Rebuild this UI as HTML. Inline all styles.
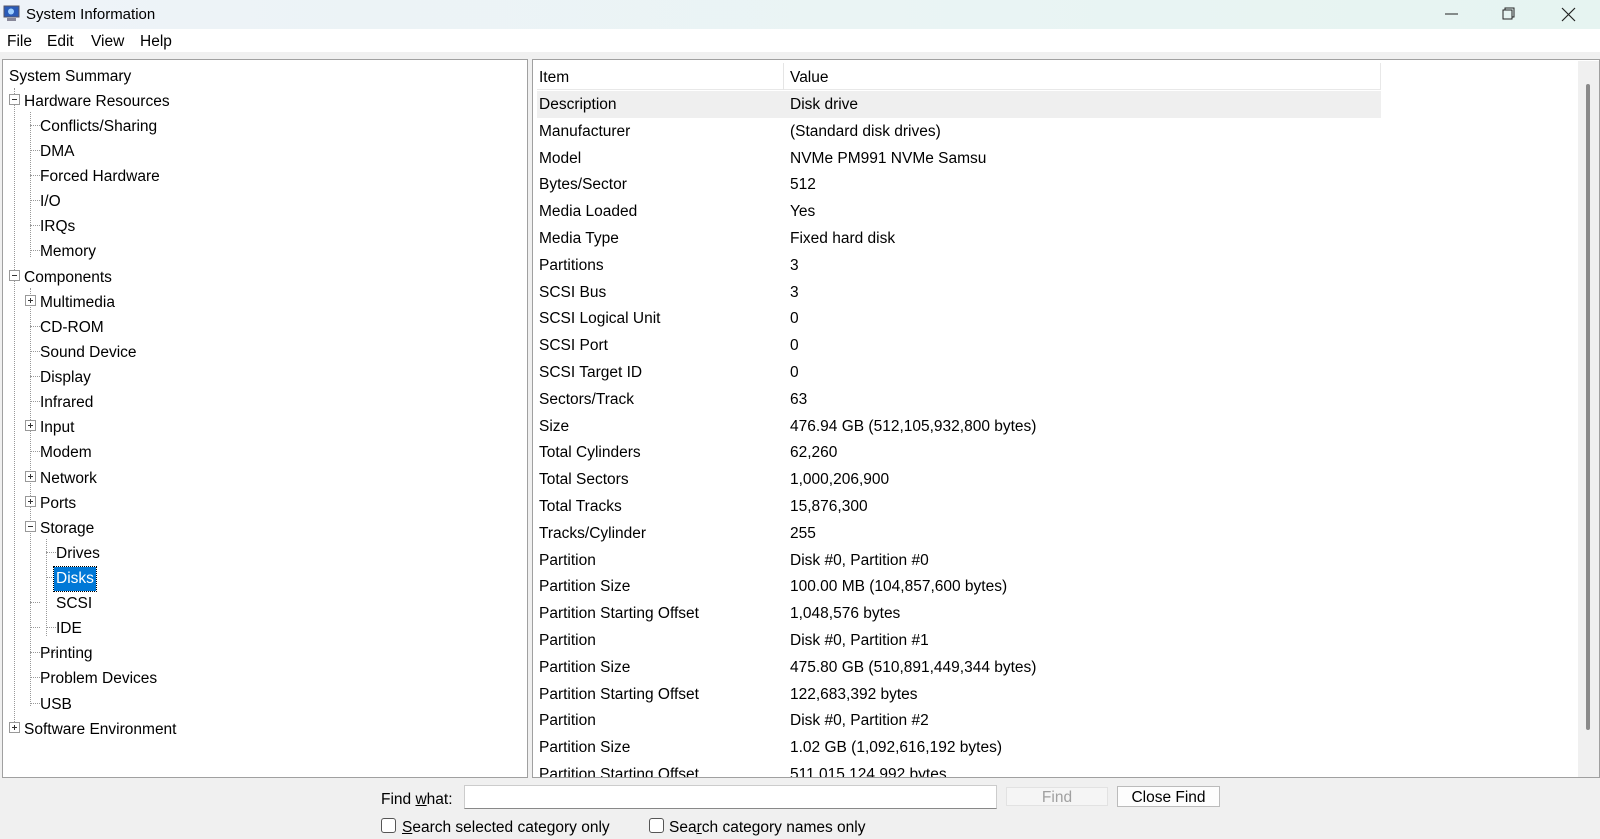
<!DOCTYPE html>
<html><head><meta charset="utf-8"><style>
*{margin:0;padding:0;box-sizing:border-box}
body{width:1600px;height:839px;overflow:hidden;background:#f0f0f0;font-family:"Liberation Sans",sans-serif;font-size:15.5px;color:#000;position:relative}
.a{position:absolute;white-space:nowrap}
#title{left:0;top:0;width:1600px;height:29px;background:linear-gradient(90deg,#eef3f8,#e6f4f1)}
#menu{left:0;top:29px;width:1600px;height:23px;background:#fff}
.pane{position:absolute;background:#fff;border:1px solid #a0a0a0;overflow:hidden}
.tr{position:absolute;height:22px;line-height:22px}
.box{position:absolute;width:11px;height:11px;border:1px solid #999;background:#fff}
.box:before{content:"";position:absolute;left:2px;top:4px;width:5px;height:1px;background:#333}
.box.p:after{content:"";position:absolute;left:4px;top:2px;width:1px;height:5px;background:#333}
.vl{position:absolute;width:0;border-left:1px dotted #999}
.hl{position:absolute;height:0;border-top:1px dotted #999}
.row{position:absolute;left:4px;height:26.8px;line-height:26.8px;width:844px}
.row span{position:absolute;top:1px}
.tx{position:absolute;left:0;top:2px;width:100%;height:100%}
</style></head><body>
<div class="a" id="title"></div>
<svg class="a" style="left:3px;top:5px" width="17" height="17" viewBox="0 0 17 17"><rect x="1" y="1" width="15" height="11" fill="#2a5bb8" stroke="#556"/><circle cx="8" cy="6.5" r="3" fill="#9fd0ff"/><rect x="4" y="13" width="9" height="3" fill="#889"/></svg>
<div class="a" style="left:26px;top:6px;font-size:15px">System Information</div>
<svg class="a" style="left:1445px;top:6px" width="150" height="18"><line x1="0" y1="8" x2="13" y2="8" stroke="#222" stroke-width="1"/><rect x="58" y="4" width="9" height="9" fill="none" stroke="#222"/><path d="M60 4V2h9v9h-2" fill="none" stroke="#222"/><path d="M117 2l13 13M130 2l-13 13" stroke="#222" stroke-width="1.2"/></svg>
<div class="a" id="menu"></div>
<div class="a" style="left:7px;top:33px">File</div>
<div class="a" style="left:47px;top:33px">Edit</div>
<div class="a" style="left:91px;top:33px">View</div>
<div class="a" style="left:140px;top:33px">Help</div>

<div class="pane" style="left:2px;top:59px;width:526px;height:719px">
<div class="vl" style="left:11px;top:28px;height:642px"></div>
<div class="vl" style="left:27px;top:52px;height:145px"></div>
<div class="vl" style="left:27px;top:228px;height:418px"></div>
<div class="vl" style="left:43px;top:479px;height:97px"></div>
<div class="hl" style="left:27px;top:65px;width:10px"></div>
<div class="hl" style="left:27px;top:90px;width:10px"></div>
<div class="hl" style="left:27px;top:115px;width:10px"></div>
<div class="hl" style="left:27px;top:140px;width:10px"></div>
<div class="hl" style="left:27px;top:165px;width:10px"></div>
<div class="hl" style="left:27px;top:190px;width:10px"></div>
<div class="hl" style="left:27px;top:266px;width:10px"></div>
<div class="hl" style="left:27px;top:291px;width:10px"></div>
<div class="hl" style="left:27px;top:316px;width:10px"></div>
<div class="hl" style="left:27px;top:341px;width:10px"></div>
<div class="hl" style="left:27px;top:391px;width:10px"></div>
<div class="hl" style="left:27px;top:542px;width:10px"></div>
<div class="hl" style="left:27px;top:567px;width:10px"></div>
<div class="hl" style="left:27px;top:592px;width:10px"></div>
<div class="hl" style="left:27px;top:617px;width:10px"></div>
<div class="hl" style="left:27px;top:643px;width:10px"></div>
<div class="hl" style="left:43px;top:492px;width:10px"></div>
<div class="hl" style="left:43px;top:517px;width:10px"></div>
<div class="hl" style="left:43px;top:567px;width:10px"></div>
<div class="hl" style="left:43px;top:592px;width:10px"></div>

<div class="box" style="left:6px;top:34px"></div>
<div class="box" style="left:6px;top:210px"></div>
<div class="box p" style="left:22px;top:235px"></div>
<div class="box p" style="left:22px;top:360px"></div>
<div class="box p" style="left:22px;top:411px"></div>
<div class="box p" style="left:22px;top:436px"></div>
<div class="box" style="left:22px;top:461px"></div>
<div class="box p" style="left:6px;top:662px"></div>
<div class="tr" style="left:51px;top:507px;background:#0078d7;outline:1px dotted #000;width:42px;height:24px"></div>
<div class="tx">
<div class="tr" style="left:6px;top:4px">System Summary</div>
<div class="tr" style="left:21px;top:29px">Hardware Resources</div>
<div class="tr" style="left:37px;top:54px">Conflicts/Sharing</div>
<div class="tr" style="left:37px;top:79px">DMA</div>
<div class="tr" style="left:37px;top:104px">Forced Hardware</div>
<div class="tr" style="left:37px;top:129px">I/O</div>
<div class="tr" style="left:37px;top:154px">IRQs</div>
<div class="tr" style="left:37px;top:179px">Memory</div>
<div class="tr" style="left:21px;top:205px">Components</div>
<div class="tr" style="left:37px;top:230px">Multimedia</div>
<div class="tr" style="left:37px;top:255px">CD-ROM</div>
<div class="tr" style="left:37px;top:280px">Sound Device</div>
<div class="tr" style="left:37px;top:305px">Display</div>
<div class="tr" style="left:37px;top:330px">Infrared</div>
<div class="tr" style="left:37px;top:355px">Input</div>
<div class="tr" style="left:37px;top:380px">Modem</div>
<div class="tr" style="left:37px;top:406px">Network</div>
<div class="tr" style="left:37px;top:431px">Ports</div>
<div class="tr" style="left:37px;top:456px">Storage</div>
<div class="tr" style="left:53px;top:481px">Drives</div>
<div class="tr" style="left:53px;top:506px;color:#fff">Disks</div>
<div class="tr" style="left:53px;top:531px">SCSI</div>
<div class="tr" style="left:53px;top:556px">IDE</div>
<div class="tr" style="left:37px;top:581px">Printing</div>
<div class="tr" style="left:37px;top:606px">Problem Devices</div>
<div class="tr" style="left:37px;top:632px">USB</div>
<div class="tr" style="left:21px;top:657px">Software Environment</div>
</div>
</div>

<div class="pane" style="left:532px;top:59px;width:1068px;height:719px">
<div style="position:absolute;left:4px;top:3px;width:844px;height:27px;border-bottom:1px solid #e8e8e8;border-right:1px solid #e8e8e8"></div>
<div class="a" style="left:250px;top:3px;height:27px;border-left:1px solid #e5e5e5"></div>
<div class="a" style="left:6px;top:9px">Item</div><div class="a" style="left:257px;top:9px">Value</div>
<div style="position:absolute;left:0;top:31px">
<div class="row" style="top:0;background:#efefef"><span style="left:2px">Description</span><span style="left:253px">Disk drive</span></div>
<div class="row" style="top:26.8px"><span style="left:2px">Manufacturer</span><span style="left:253px">(Standard disk drives)</span></div>
<div class="row" style="top:53.6px"><span style="left:2px">Model</span><span style="left:253px">NVMe PM991 NVMe Samsu</span></div>
<div class="row" style="top:80.4px"><span style="left:2px">Bytes/Sector</span><span style="left:253px">512</span></div>
<div class="row" style="top:107.2px"><span style="left:2px">Media Loaded</span><span style="left:253px">Yes</span></div>
<div class="row" style="top:134px"><span style="left:2px">Media Type</span><span style="left:253px">Fixed hard disk</span></div>
<div class="row" style="top:160.8px"><span style="left:2px">Partitions</span><span style="left:253px">3</span></div>
<div class="row" style="top:187.6px"><span style="left:2px">SCSI Bus</span><span style="left:253px">3</span></div>
<div class="row" style="top:214.4px"><span style="left:2px">SCSI Logical Unit</span><span style="left:253px">0</span></div>
<div class="row" style="top:241.2px"><span style="left:2px">SCSI Port</span><span style="left:253px">0</span></div>
<div class="row" style="top:268px"><span style="left:2px">SCSI Target ID</span><span style="left:253px">0</span></div>
<div class="row" style="top:294.8px"><span style="left:2px">Sectors/Track</span><span style="left:253px">63</span></div>
<div class="row" style="top:321.6px"><span style="left:2px">Size</span><span style="left:253px">476.94 GB (512,105,932,800 bytes)</span></div>
<div class="row" style="top:348.4px"><span style="left:2px">Total Cylinders</span><span style="left:253px">62,260</span></div>
<div class="row" style="top:375.2px"><span style="left:2px">Total Sectors</span><span style="left:253px">1,000,206,900</span></div>
<div class="row" style="top:402px"><span style="left:2px">Total Tracks</span><span style="left:253px">15,876,300</span></div>
<div class="row" style="top:428.8px"><span style="left:2px">Tracks/Cylinder</span><span style="left:253px">255</span></div>
<div class="row" style="top:455.6px"><span style="left:2px">Partition</span><span style="left:253px">Disk #0, Partition #0</span></div>
<div class="row" style="top:482.4px"><span style="left:2px">Partition Size</span><span style="left:253px">100.00 MB (104,857,600 bytes)</span></div>
<div class="row" style="top:509.2px"><span style="left:2px">Partition Starting Offset</span><span style="left:253px">1,048,576 bytes</span></div>
<div class="row" style="top:536px"><span style="left:2px">Partition</span><span style="left:253px">Disk #0, Partition #1</span></div>
<div class="row" style="top:562.8px"><span style="left:2px">Partition Size</span><span style="left:253px">475.80 GB (510,891,449,344 bytes)</span></div>
<div class="row" style="top:589.6px"><span style="left:2px">Partition Starting Offset</span><span style="left:253px">122,683,392 bytes</span></div>
<div class="row" style="top:616.4px"><span style="left:2px">Partition</span><span style="left:253px">Disk #0, Partition #2</span></div>
<div class="row" style="top:643.2px"><span style="left:2px">Partition Size</span><span style="left:253px">1.02 GB (1,092,616,192 bytes)</span></div>
<div class="row" style="top:670px"><span style="left:2px">Partition Starting Offset</span><span style="left:253px">511,015,124,992 bytes</span></div>
</div>
<div class="a" style="left:1045px;top:1px;width:21px;height:717px;background:#f0f0f0"></div>
<div class="a" style="left:1053px;top:24px;width:4px;height:646px;background:#8a8a8a;border-radius:2px"></div>
</div>

<div class="a" style="left:381px;top:791px">Find <u>w</u>hat:</div>
<div class="a" style="left:464px;top:785px;width:533px;height:24px;background:#fff;border:1px solid #ccc;border-bottom-color:#888"></div>
<div class="a" style="left:1006px;top:787px;width:102px;height:19px;background:#f5f5f5;border:1px solid #e2e2e2;color:#a0a0a0;text-align:center;line-height:19px">Find</div>
<div class="a" style="left:1117px;top:786px;width:103px;height:21px;background:#fdfdfd;border:1px solid #bbb;text-align:center;line-height:21px">Close Find</div>
<div class="a" style="left:381px;top:818px;width:15px;height:15px;border:1px solid #555;border-radius:3px;background:#fff"></div>
<div class="a" style="left:402px;top:819px"><u>S</u>earch selected category only</div>
<div class="a" style="left:649px;top:818px;width:15px;height:15px;border:1px solid #555;border-radius:3px;background:#fff"></div>
<div class="a" style="left:669px;top:819px">Sea<u>r</u>ch category names only</div>
</body></html>
